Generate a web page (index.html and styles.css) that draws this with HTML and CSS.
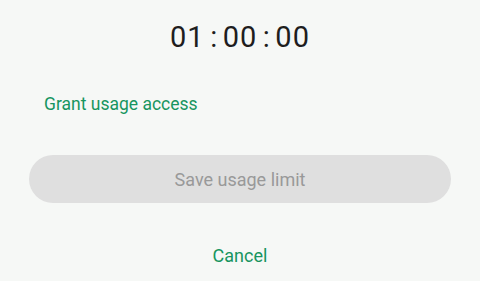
FILE: index.html
```html
<!DOCTYPE html>
<html>
<head>
<meta charset="utf-8">
<link rel="stylesheet" href="styles.css">
</head>
<body>
<div class="page">
  <div class="timer">01<span class="colon">:</span>00<span class="colon">:</span>00</div>
  <div class="grant">Grant usage access</div>
  <button class="save">Save usage limit</button>
  <div class="cancel">Cancel</div>
</div>
</body>
</html>
```
FILE: styles.css
```css
html, body {
  margin: 0;
  padding: 0;
  background: #f6f8f6;
}
.page {
  width: 480px;
  height: 281px;
  display: flex;
  flex-direction: column;
  font-family: Roboto, "Noto Sans", sans-serif;
}
.timer {
  font-family: Roboto, sans-serif;
  font-size: 29px;
  letter-spacing: 1px;
  line-height: 40px;
  color: #1e1e1e;
  text-align: center;
  margin-top: 17px;
}
.colon {
  margin: 0 4.5px 0 5.5px;
}
.grant {
  color: #17955f;
  font-size: 17.5px;
  line-height: 24px;
  margin: 35px 0 0 44px;
}
.save {
  margin: 39px 0 0 29px;
  width: 422px;
  height: 48px;
  border: none;
  border-radius: 24px;
  background: #dfdfdf;
  color: #999999;
  font-family: Roboto, "Noto Sans", sans-serif;
  font-size: 18px;
  padding: 0;
}
.cancel {
  color: #17955f;
  font-size: 18px;
  line-height: 24px;
  text-align: center;
  margin-top: 41px;
}
```
